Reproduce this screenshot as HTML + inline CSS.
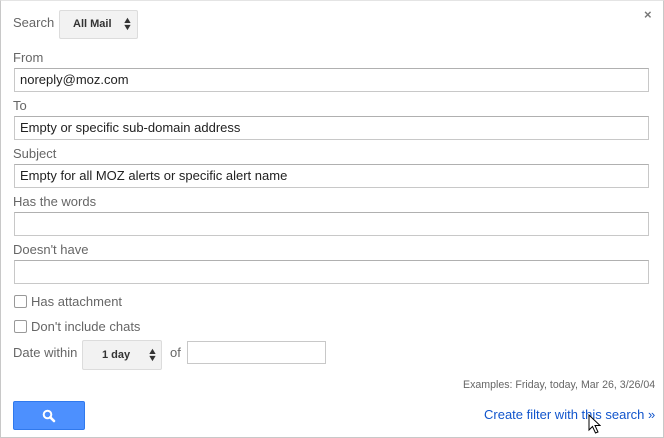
<!DOCTYPE html><html><head><style>
body{margin:0;width:664px;height:438px;background:#fff;font-family:"Liberation Sans",sans-serif;font-size:13px;color:#222;position:relative;overflow:hidden}
.a{position:absolute}
.frame{left:0;top:0;width:662px;height:436px;border:1px solid #c8c8c8;border-top-color:#e4e4e4}
.lbl{color:#666;font-size:13px}
.in{left:14px;width:628px;height:22px;border:1px solid #c8c8c8;border-top-color:#b0b0b0;font-size:13px;line-height:22px;padding-left:5px;box-sizing:content-box;color:#222}
.sel{background:#f2f2f2;border:1px solid #dcdcdc;border-radius:2px;font-weight:bold;font-size:11px;color:#333}
.cb{width:11px;height:11px;border:1px solid #999;border-radius:2px;left:14px}
</style></head><body>
<div class="a frame"></div>
<div class="a lbl" style="left:13px;top:15px">Search</div>
<div class="a sel" style="left:59px;top:10px;width:77px;height:27px"><span class="a" style="left:13px;top:7px">All Mail</span><span class="a" style="left:63px;top:6px;font-size:9px;line-height:7px;transform:scaleX(1.2)">▲<br>▼</span></div>
<div class="a" style="left:644px;top:7px;color:#777;font-size:13px;font-weight:bold">×</div>
<div class="a lbl" style="left:13px;top:50px">From</div>
<div class="a in" style="top:68px">noreply@moz.com</div>
<div class="a lbl" style="left:13px;top:98px">To</div>
<div class="a in" style="top:116px">Empty or specific sub-domain address</div>
<div class="a lbl" style="left:13px;top:146px">Subject</div>
<div class="a in" style="top:164px">Empty for all MOZ alerts or specific alert name</div>
<div class="a lbl" style="left:13px;top:194px">Has the words</div>
<div class="a in" style="top:212px"></div>
<div class="a lbl" style="left:13px;top:242px">Doesn't have</div>
<div class="a in" style="top:260px"></div>
<div class="a cb" style="top:295px"></div>
<div class="a lbl" style="left:31px;top:294px">Has attachment</div>
<div class="a cb" style="top:320px"></div>
<div class="a lbl" style="left:31px;top:319px">Don't include chats</div>
<div class="a lbl" style="left:13px;top:345px">Date within</div>
<div class="a sel" style="left:82px;top:340px;width:78px;height:28px"><span class="a" style="left:19px;top:8px">1 day</span><span class="a" style="left:65px;top:7px;font-size:9px;line-height:7px;transform:scaleX(1.2)">▲<br>▼</span></div>
<div class="a lbl" style="left:170px;top:345px">of</div>
<div class="a" style="left:187px;top:341px;width:137px;height:21px;border:1px solid #c8c8c8"></div>
<div class="a" style="left:463px;top:379px;font-size:10.6px;color:#666">Examples: Friday, today, Mar 26, 3/26/04</div>
<div class="a" style="left:13px;top:401px;width:70px;height:27px;background:#4d90fe;border:1px solid #3079ed;border-radius:2px">
<svg class="a" style="left:28px;top:7px" width="14" height="14" viewBox="0 0 14 14"><circle cx="5.5" cy="5.5" r="3.8" fill="none" stroke="#fff" stroke-width="2"/><path d="M8.3 8.3L12 12" stroke="#fff" stroke-width="2.6" stroke-linecap="round"/></svg></div>
<div class="a" style="left:484px;top:407px;color:#15c;font-size:13px">Create filter with this search »</div>
<svg class="a" style="left:588px;top:414px" width="13" height="20" viewBox="0 0 13 20"><path d="M1 1V16L4.5 12.5L7.5 19L10 18L7 11.5H12Z" fill="#fff" stroke="#000" stroke-width="1"/></svg>
</body></html>
